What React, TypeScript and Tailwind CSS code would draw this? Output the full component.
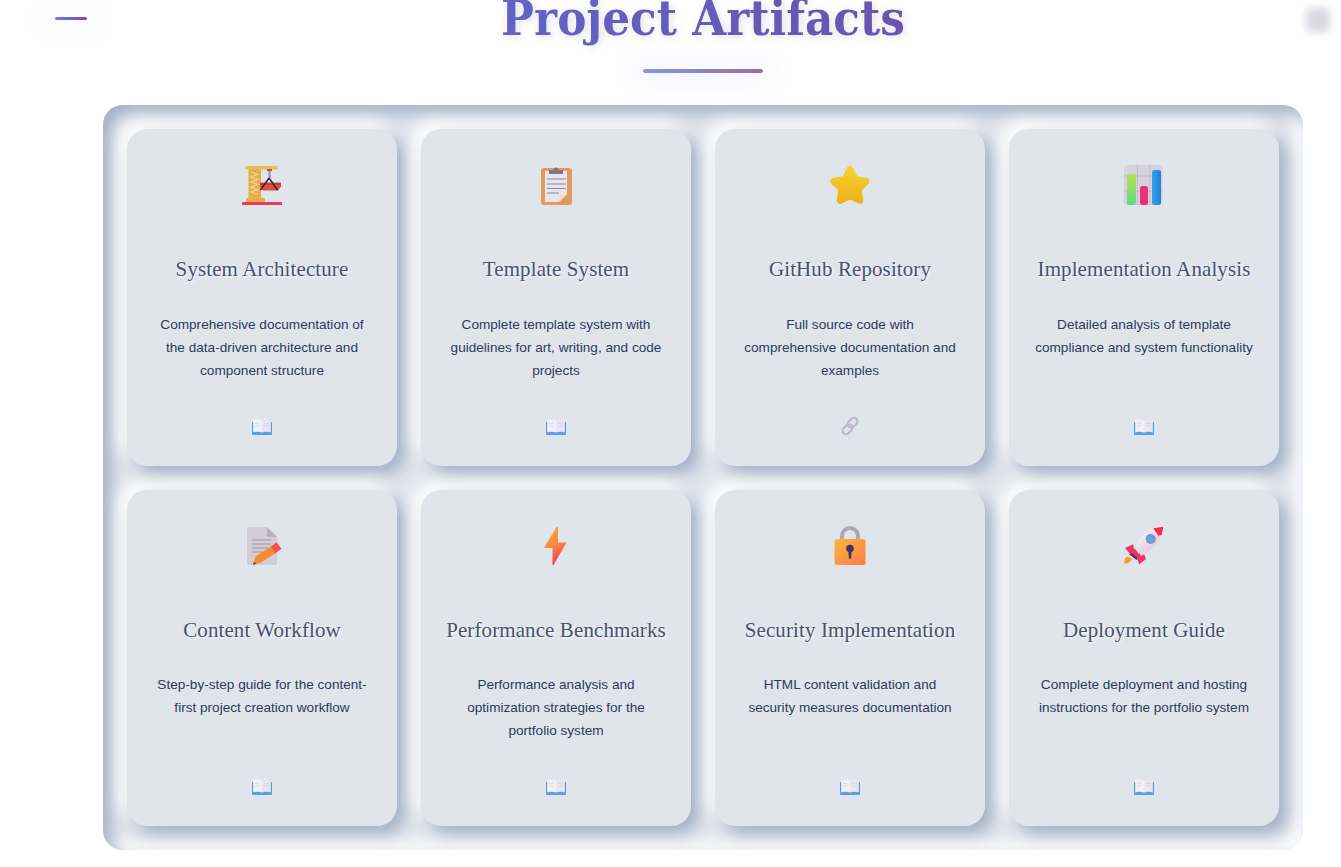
import type { ReactNode } from "react"

const CraneIcon = () => (
  <svg width="40" height="40" viewBox="0 0 40 40">
    <rect x="6.500" y="4" width="12.500" height="30" fill="#e3ad4a" />
    <path d="M9 7l7 2.500-7 2.500 7 2.500-7 2.500 7 2.500-7 2.500 7 2.500-7 2.500 7 2.500" fill="none" stroke="#f0d48c" strokeWidth="1.300" />
    <rect x="3" y="1" width="33" height="3.500" rx="1.700" fill="#ecbf4c" />
    <rect x="4" y="33" width="19" height="4" rx="1" fill="#f3ab3f" />
    <rect x="0" y="37" width="40" height="3" rx="0.500" fill="#e8405a" />
    <rect x="25" y="4" width="5" height="2" fill="#d9404e" />
    <path d="M27.500 6v7" stroke="#9b98a8" strokeWidth="2.200" />
    <path d="M18 17.500h21v4l-3 4H21l-3-4z" fill="#d9523f" />
    <path d="M18 19h21" stroke="#e02d45" strokeWidth="2" />
    <path d="M27 13l-8.500 12M27 13l8.500 12" fill="none" stroke="#36203a" strokeWidth="1.500" />
  </svg>
)

const ClipboardIcon = () => (
  <svg width="40" height="40" viewBox="0 0 40 40">
    <rect x="5" y="3" width="31" height="37" rx="3" fill="#e09a5b" />
    <path d="M9 6h22v23l-8 8H9z" fill="#e9e5f0" />
    <path d="M23 37l1-7 7-1z" fill="#f3d9c0" />
    <path d="M13 9V5h4.500a2.500 2.500 0 0 1 5 0H27v4z" fill="#7d7685" />
    <path d="M11 14h19M11 19h19M11 23.500h19M11 28h12" stroke="#8d8796" strokeWidth="1.200" />
  </svg>
)

const StarIcon = () => (
  <svg width="40" height="40" viewBox="0 0 40 40">
    <defs>
      <linearGradient id="starFill" x1="0" y1="0" x2="0" y2="1">
        <stop offset="0" stopColor="#f7d02c" />
        <stop offset="1" stopColor="#ecb31f" />
      </linearGradient>
    </defs>
    <path
      d="M20 4.500l5 10 11 1.800-8 8 1.800 11L20 30.500l-9.800 4.800 1.800-11-8-8 11-1.800z"
      fill="url(#starFill)"
      stroke="url(#starFill)"
      strokeWidth="7"
      strokeLinejoin="round"
    />
  </svg>
)

const ChartIcon = () => (
  <svg width="40" height="40" viewBox="0 0 40 40">
    <defs>
      <linearGradient id="barGreen" x1="0" y1="0" x2="0" y2="1">
        <stop offset="0" stopColor="#b6e04e" />
        <stop offset="1" stopColor="#5fdc84" />
      </linearGradient>
      <linearGradient id="barBlue" x1="0" y1="0" x2="1" y2="0">
        <stop offset="0" stopColor="#2fa4ee" />
        <stop offset="1" stopColor="#2a7fd8" />
      </linearGradient>
    </defs>
    <rect x="0" y="0" width="38.500" height="40" rx="4" fill="#d6d1dc" />
    <path d="M0 11h38.500M0 26h38.500M13.500 0v40M26 0v40" stroke="#bab5c3" strokeWidth="0.800" />
    <rect x="3" y="9" width="9" height="31" rx="2.500" fill="url(#barGreen)" />
    <rect x="16" y="21" width="8" height="19" rx="2.500" fill="#e8317a" />
    <rect x="28" y="5" width="9" height="35" rx="2.500" fill="url(#barBlue)" />
  </svg>
)

const PageIcon = () => (
  <svg width="40" height="40" viewBox="0 0 40 40">
    <path d="M5 2a1 1 0 0 1 1-1h19l10 10v27a1 1 0 0 1-1 1H6a1 1 0 0 1-1-1z" fill="#d4cdd8" />
    <path d="M25 1l10 10H25z" fill="#b8b0be" />
    <path d="M10 14h19M10 18h19M10 22h17M10 26h10" stroke="#9d94a6" strokeWidth="1.200" />
    <path d="M11 39l2.600-8.700L28.600 20.800 33.400 27.200 18.400 36.700z" fill="#f58a2e" />
    <path d="M28.600 20.800l6-4.500 4.800 6.400-6 4.500z" fill="#f0504e" />
    <path d="M11 39l.8-2.800 2.200 1z" fill="#3d2f3a" />
  </svg>
)

const BoltIcon = () => (
  <svg width="40" height="40" viewBox="0 0 40 40">
    <defs>
      <linearGradient id="boltFill" x1="0" y1="0" x2="0.300" y2="1">
        <stop offset="0" stopColor="#ffa63a" />
        <stop offset="0.550" stopColor="#fb8a3e" />
        <stop offset="1" stopColor="#ee3f5c" />
      </linearGradient>
    </defs>
    <path d="M20.500 1h1.500v15.500h8.500L17.500 39H16.500V22H8z" fill="url(#boltFill)" />
  </svg>
)

const LockIcon = () => (
  <svg width="40" height="40" viewBox="0 0 40 40">
    <defs>
      <linearGradient id="lockFill" x1="0" y1="0" x2="1" y2="1">
        <stop offset="0" stopColor="#ffb63c" />
        <stop offset="1" stopColor="#fb7b4c" />
      </linearGradient>
    </defs>
    <path d="M12 15v-5a8 8 0 0 1 16 0v5" fill="none" stroke="#aca9b3" strokeWidth="4" />
    <rect x="4.500" y="13" width="31" height="26" rx="2.500" fill="url(#lockFill)" />
    <circle cx="20" cy="22.500" r="3.800" fill="#3b3468" />
    <path d="M18.300 24h3.400l-.5 7.500a1.200 1.200 0 0 1-2.400 0z" fill="#3b3468" />
  </svg>
)

const RocketIcon = () => (
  <svg width="40" height="40" viewBox="0 0 40 40">
    <defs>
      <linearGradient id="rocketBody" x1="0.200" y1="0.200" x2="0.800" y2="0.800">
        <stop offset="0" stopColor="#f6eef4" />
        <stop offset="1" stopColor="#dcc6da" />
      </linearGradient>
    </defs>
    <path d="M0 37.500c.2-2.800 1-5.600 3-7l5 2c-.6 3-4 5.600-8 5z" fill="#fb9a2e" />
    <path d="M1 22l8.300-3.700.7 7.400-4 2.300z" fill="#ea3468" />
    <path d="M17.700 22.300L22 33l-6.700 5.300-2.600-6.600z" fill="#ea3468" />
    <path d="M39 1C28 2 17 8 11 20l6 10C28 25 38 14 39 1z" fill="url(#rocketBody)" />
    <path d="M5.300 28.300l5-6 6.500 8-4.100 3.700z" fill="#ea3468" />
    <path d="M5.300 28.300l3-1 4.700 4.500-.3 2.200z" fill="#5b2f5e" />
    <path d="M29.300 2.300L39.300.7l-1.600 8.300-3.400.7z" fill="#ee2f4f" />
    <circle cx="26.700" cy="13" r="5" fill="#8f8aa4" />
    <circle cx="26.700" cy="13" r="3.500" fill="#5ba5ee" />
  </svg>
)

const BookIcon = () => (
  <svg width="20" height="16" viewBox="0 0 20 16">
    <path d="M0 3h20v12a1 1 0 0 1-1 1H1a1 1 0 0 1-1-1z" fill="#5b9fe2" />
    <path d="M1.200 1C4 0 7.500.2 10 1.300v12.200C7.500 12.500 4 12.400 1.200 13.200z" fill="#f2f0f7" />
    <path d="M18.800 1C16 0 12.500.2 10 1.300v12.200c2.500-1 6-1.100 8.800-.3z" fill="#e9e6f0" />
    <path d="M3 4.500h4.500M3 7h4.500M12.500 4.500H17M12.500 7H17" stroke="#d5d0de" strokeWidth="0.800" />
  </svg>
)

const LinkIcon = () => (
  <svg className="-translate-y-px" width="20" height="20" viewBox="0 0 20 20" fill="none" stroke="#bcb5c8" strokeWidth="2">
    <rect x="9" y="1.200" width="7" height="11" rx="3.500" transform="rotate(45 12.500 6.700)" />
    <rect x="4" y="7.800" width="7" height="11" rx="3.500" transform="rotate(45 7.500 13.300)" />
  </svg>
)

type Artifact = {
  title: string
  text: string
  icon: ReactNode
  link?: ReactNode
}

const artifacts: Artifact[] = [
  {
    title: "System Architecture",
    text: "Comprehensive documentation of the data-driven architecture and component structure",
    icon: <CraneIcon />,
  },
  {
    title: "Template System",
    text: "Complete template system with guidelines for art, writing, and code projects",
    icon: <ClipboardIcon />,
  },
  {
    title: "GitHub Repository",
    text: "Full source code with comprehensive documentation and examples",
    icon: <StarIcon />,
    link: <LinkIcon />,
  },
  {
    title: "Implementation Analysis",
    text: "Detailed analysis of template compliance and system functionality",
    icon: <ChartIcon />,
  },
  {
    title: "Content Workflow",
    text: "Step-by-step guide for the content-first project creation workflow",
    icon: <PageIcon />,
  },
  {
    title: "Performance Benchmarks",
    text: "Performance analysis and optimization strategies for the portfolio system",
    icon: <BoltIcon />,
  },
  {
    title: "Security Implementation",
    text: "HTML content validation and security measures documentation",
    icon: <LockIcon />,
  },
  {
    title: "Deployment Guide",
    text: "Complete deployment and hosting instructions for the portfolio system",
    icon: <RocketIcon />,
  },
]

function ArtifactCard({ item }: { item: Artifact }) {
  return (
    <div className="flex h-[336.5px] flex-col items-center rounded-[20px] bg-[#e0e5ec] px-6 pt-9 pb-[29px] text-center shadow-[8px_8px_16px_#a3b1c6,-8px_-8px_16px_#ffffff]">
      <div className="h-10">{item.icon}</div>
      <h3 className="mt-[51px] font-['Liberation_Serif',serif] text-[21px] leading-[26px] tracking-[0.1px] whitespace-nowrap text-[#47526e] [text-shadow:1px_1px_2px_#ffffff]">
        {item.title}
      </h3>
      <p className="mt-[30.6px] w-[222px] font-['Liberation_Sans',sans-serif] text-[13.6px] leading-[23px] text-[#2d3a5a]">
        {item.text}
      </p>
      <div className="mt-auto flex h-5 items-center justify-center">{item.link ?? <BookIcon />}</div>
    </div>
  )
}

export default function App() {
  return (
    <div className="relative h-[867px] overflow-hidden bg-white">
      {/* floating toggles */}
      <div className="absolute top-[17px] left-[55px] h-[3px] w-8 rounded-full bg-gradient-to-r from-[#667eea] to-[#764ba2] shadow-[0_0_24px_14px_rgba(102,126,234,0.03)]" />
      <div className="absolute top-[8px] left-[1306px] h-6 w-6 rounded-md bg-[#d8d8e0] blur-[4px]" />

      <main className="ml-[65px] flex flex-col items-center">
        <h1 className="-mt-[14px] bg-gradient-to-r from-[#6462c6] to-[#6854ad] bg-clip-text font-['DejaVu_Serif_Condensed','DejaVu_Serif',serif] text-[48.7px] leading-[64px] font-bold text-transparent drop-shadow-[2px_2px_4px_rgba(0,0,0,0.12)]">
          Project Artifacts
        </h1>
        <div className="mt-[19px] h-1 w-[120px] rounded-full bg-gradient-to-r from-[#7f98e4] to-[#9a6ca6] shadow-[0_0_24px_12px_rgba(102,126,234,0.05)]" />
        <section className="mt-8 w-[1200px] rounded-[20px] bg-[#e0e5ec] p-6 shadow-[inset_8px_8px_16px_#a3b1c6,inset_-8px_-8px_16px_#ffffff]">
          <div className="grid grid-cols-4 gap-6">
            {artifacts.map((item) => (
              <ArtifactCard key={item.title} item={item} />
            ))}
          </div>
        </section>
      </main>
    </div>
  )
}
